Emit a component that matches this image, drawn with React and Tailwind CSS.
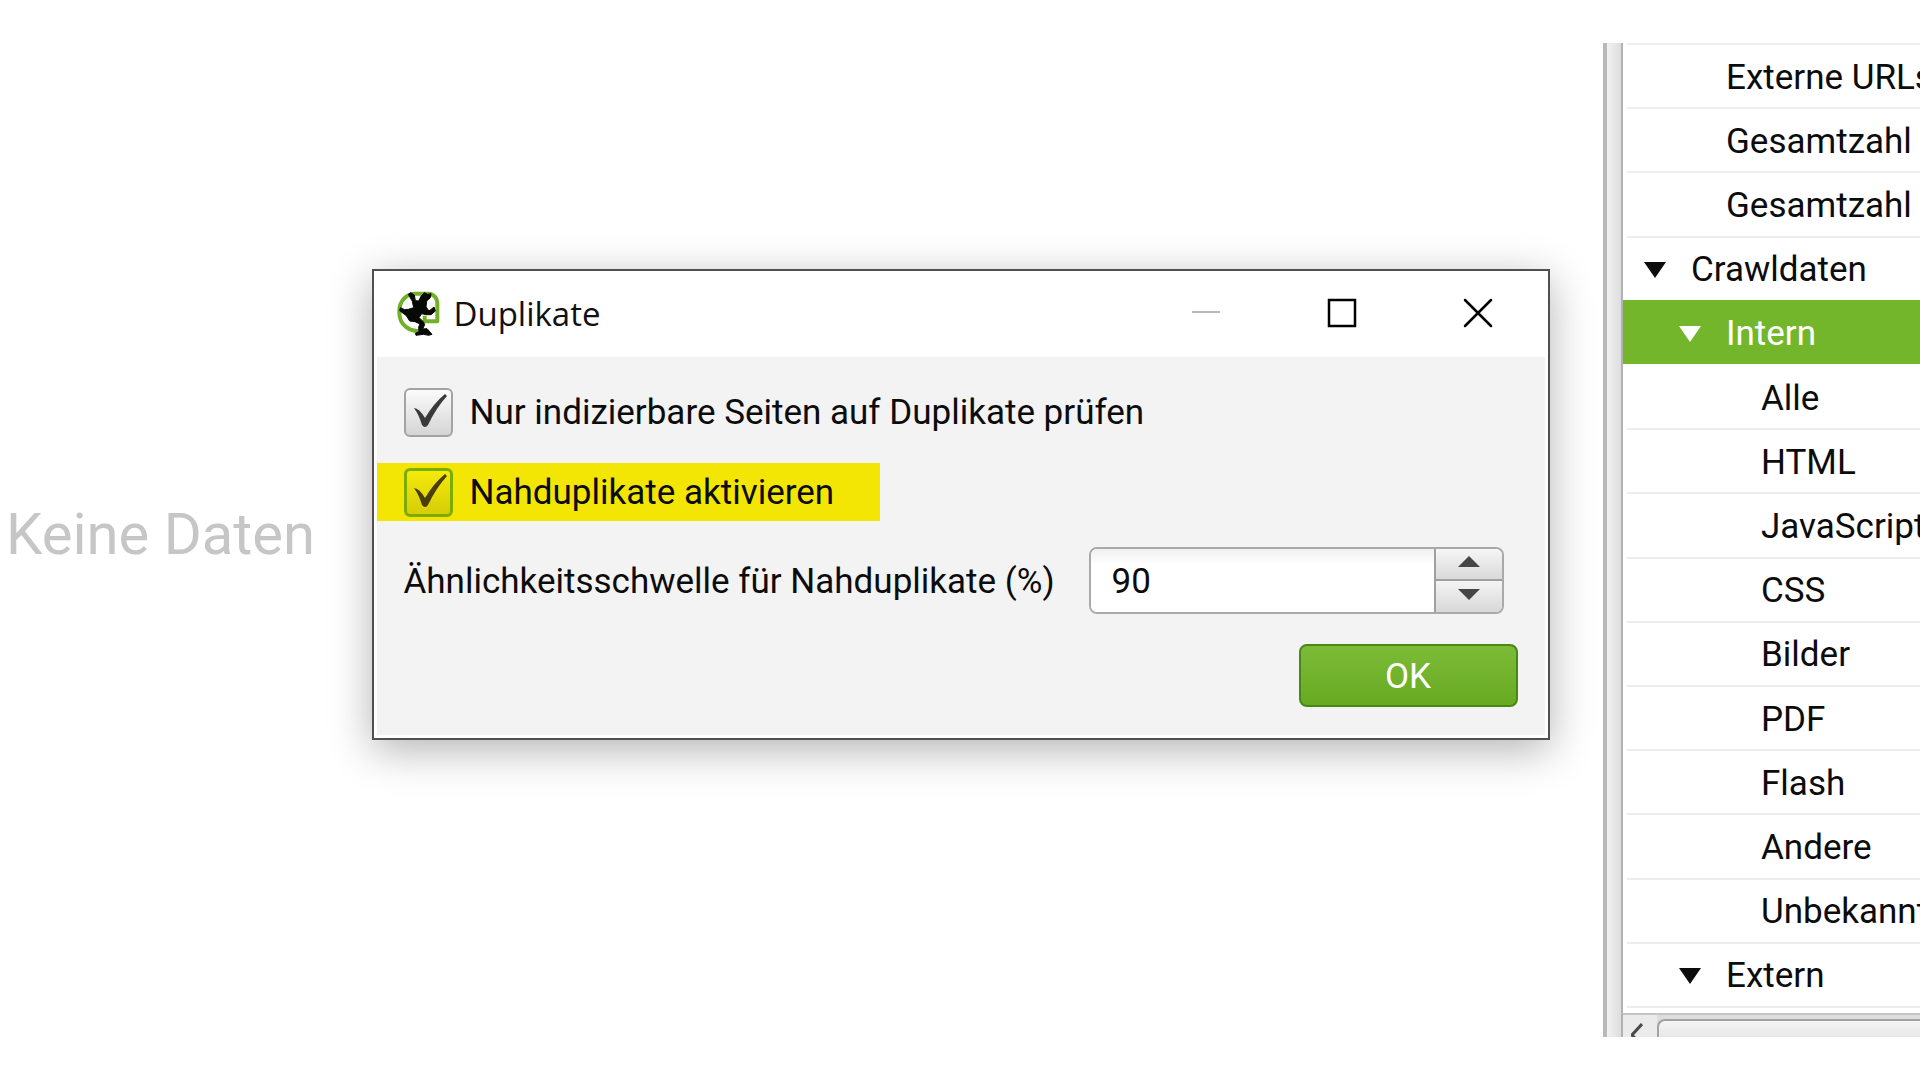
import { useState } from "react";

const rows = [
  { label: "Externe URLs", level: 1 },
  { label: "Gesamtzahl", level: 1 },
  { label: "Gesamtzahl", level: 1 },
  { label: "Crawldaten", level: 0, open: true },
  { label: "Intern", level: 1, open: true, selected: true },
  { label: "Alle", level: 2 },
  { label: "HTML", level: 2 },
  { label: "JavaScript", level: 2 },
  { label: "CSS", level: 2 },
  { label: "Bilder", level: 2 },
  { label: "PDF", level: 2 },
  { label: "Flash", level: 2 },
  { label: "Andere", level: 2 },
  { label: "Unbekannt", level: 2 },
  { label: "Extern", level: 1, open: true },
];

const indent = ["pl-4", "pl-[51px]", "pl-[86px]"];

function TreeRow({ row }) {
  const tone = row.selected
    ? "border-l-4 border-[#73b62b] bg-[#73b62b] text-white [&+li]:border-t-white"
    : "ml-1 border-[#ededed] text-[#0c0c0c]";
  return (
    <li className={`flex min-h-0 flex-1 items-center border-t-2 pt-[3px] whitespace-nowrap ${indent[row.level]} ${tone}`}>
      <span className="flex w-12 shrink-0">
        {row.open && (
          <svg className="h-4 w-6" viewBox="0 0 24 16" fill="currentColor" aria-hidden="true">
            <path d="M1 0H23L12 16Z" />
          </svg>
        )}
      </span>
      <span>{row.label}</span>
    </li>
  );
}

function Tree() {
  return (
    <aside className="flex w-[297px] shrink-0 flex-col overflow-hidden bg-white">
      <ul className="flex min-h-0 flex-1 flex-col text-[35px] leading-10">
        {rows.map((row, i) => (
          <TreeRow key={i} row={row} />
        ))}
      </ul>
      <div className="ml-1 h-[7px] shrink-0 border-t-2 border-[#ededed]" />
      <div className="flex h-6 shrink-0 overflow-hidden border-t-2 border-[#c4c4c4] bg-[#dedede]">
        <button type="button" aria-label="Nach links" className="flex w-[34px] shrink-0 bg-[#ebebeb] pt-2 pl-2">
          <svg className="h-6 w-3 shrink-0" viewBox="0 0 12 24" fill="none" stroke="#4a4a4a" strokeWidth="3" aria-hidden="true">
            <path d="M11 1L1 12L11 23" />
          </svg>
        </button>
        <div className="mt-1 h-10 flex-1 rounded-tl-lg border-t-2 border-l-2 border-[#a2a2a2] bg-linear-to-b from-[#f5f5f5] to-[#d5d5d5]" />
      </div>
    </aside>
  );
}

function Logo() {
  return (
    <svg className="h-[45px] w-[43px]" viewBox="111 89 129 135" aria-hidden="true">
      <path
        d="M182 208C150 213 118 191 118 154C116 119 140 97 165 97H205C222 98 232 110 232 128V180H194V163"
        fill="none"
        stroke="#72b02a"
        strokeWidth="12"
        strokeLinejoin="round"
      />
      <path
        d="M145 99L152 94L163 101L166 118L176 119L184 103L193 94L203 99L213 97L211 109L200 119L198 137L207 149L222 137L226 149L213 160H198L185 157L177 169L190 181L194 190L188 203L201 202L216 219L206 222L190 219L168 222L166 216L177 211L176 197L180 188L165 181L149 179L139 163L119 148L121 139L134 145L145 144L161 139L157 120Z"
        fill="#060904"
        stroke="#060904"
        strokeWidth="3"
        strokeLinejoin="round"
      />
      <path d="M130 124L143 112L151 130L139 138Z M208 122L223 119L225 134L211 139Z" fill="#f3f8ec" />
    </svg>
  );
}

function TitleBar() {
  return (
    <header className="flex h-[86px] items-center pb-0.5 pl-5">
      <Logo />
      <h1 className="ml-3.5 flex-1 pt-0.5 font-['Open_Sans',sans-serif] text-[33px] leading-10 text-[#111]">Duplikate</h1>
      <div className="flex items-center gap-[106px] pr-[52px]">
        <button type="button" disabled aria-label="Minimieren">
          <svg className="size-[30px]" viewBox="0 0 30 30" stroke="#bababa" strokeWidth="2">
            <path d="M1 14H29" />
          </svg>
        </button>
        <button type="button" aria-label="Maximieren">
          <svg className="size-[30px]" viewBox="0 0 30 30" fill="none" stroke="#000" strokeWidth="2.500">
            <path d="M2 2H28V28H2Z" />
          </svg>
        </button>
        <button type="button" aria-label="Schließen">
          <svg className="size-[30px]" viewBox="0 0 30 30" stroke="#000" strokeWidth="2.500" strokeLinecap="round">
            <path d="M2 2L28 28M28 2L2 28" />
          </svg>
        </button>
      </div>
    </header>
  );
}

function CheckOption({ id, label, highlighted }) {
  const [checked, setChecked] = useState(true);
  const box = highlighted
    ? "border-[3px] border-[#7cac00] from-[#f4ea0a] to-[#d6cd08]"
    : "border-2 border-[#a3a3a3] from-[#fbfbfb] to-[#d5d5d5]";
  return (
    <div className={`flex h-[58px] w-[503px] items-center pl-[27px] whitespace-nowrap ${highlighted ? "bg-[#f4e604]" : ""}`}>
      <span className="relative flex shrink-0">
        <input
          id={id}
          type="checkbox"
          checked={checked}
          onChange={(e) => setChecked(e.target.checked)}
          className={`size-[49px] appearance-none rounded-md bg-linear-to-b ${box}`}
        />
        {checked && (
          <svg className="pointer-events-none absolute inset-0 size-[49px]" viewBox="0 0 49 49" fill={highlighted ? "#4a3d08" : "#3a3a3a"} aria-hidden="true">
            <path d="M10 20Q15 20 21 30Q30 15 41 6L43 8Q32 20 24 37Q21 41 18 37Q15 27 10 20Z" />
          </svg>
        )}
      </span>
      <label htmlFor={id} className="pt-0.5 pl-[17px]">
        {label}
      </label>
    </div>
  );
}

function Arrow({ down }) {
  return (
    <svg className="h-[11px] w-[22px]" viewBox="0 0 22 11" fill="#454545" aria-hidden="true">
      <path d={down ? "M0 0H22L11 11Z" : "M0 11H22L11 0Z"} />
    </svg>
  );
}

function Spinner() {
  const [value, setValue] = useState(90);
  const step = (n) => setValue((v) => Math.min(100, Math.max(0, Number(v) + n)));
  return (
    <div className="flex h-[67px] w-[415px] overflow-hidden rounded-lg border-2 border-[#a9a9a9] bg-white">
      <input
        id="threshold"
        type="text"
        inputMode="numeric"
        value={value}
        onChange={(e) => setValue(e.target.value)}
        className="min-w-0 flex-1 bg-linear-to-b from-[#f0f0f0] via-white via-25% to-white pt-0.5 pl-[21px] outline-none"
      />
      <div className="grid w-[68px] grid-rows-2 border-l-2 border-[#a0a0a0]">
        <button type="button" aria-label="Erhöhen" onClick={() => step(1)} className="flex items-center justify-center border-b-2 border-[#a0a0a0] bg-linear-to-b from-[#f6f6f6] to-[#dadada] pb-1">
          <Arrow />
        </button>
        <button type="button" aria-label="Verringern" onClick={() => step(-1)} className="flex items-center justify-center bg-linear-to-b from-[#f4f4f4] to-[#d8d8d8] pb-1">
          <Arrow down />
        </button>
      </div>
    </div>
  );
}

function Dialog() {
  return (
    <section role="dialog" aria-label="Duplikate" className="w-[1178px] border-2 border-[#505050] bg-white px-[3px] pb-[3px] shadow-[0_10px_40px_rgba(0,0,0,0.3)]">
      <TitleBar />
      <form className="bg-[#f3f3f3] pt-[26px] pb-7 text-[35px] leading-10 text-[#0c0c0c]" onSubmit={(e) => e.preventDefault()}>
        <CheckOption id="indexable" label="Nur indizierbare Seiten auf Duplikate prüfen" />
        <div className="pt-[22px]">
          <CheckOption id="near" label="Nahduplikate aktivieren" highlighted />
        </div>
        <div className="flex items-center justify-between pt-[26px] pr-[41px] pl-[27px]">
          <label htmlFor="threshold" className="pt-0.5">Ähnlichkeitsschwelle für Nahduplikate (%)</label>
          <Spinner />
        </div>
        <div className="flex justify-end pt-[30px] pr-[27px]">
          <button type="submit" className="h-[63px] w-[219px] rounded-lg border-2 border-[#4b8718] bg-linear-to-b from-[#7cbb36] to-[#68aa22] pt-0.5 text-white">
            OK
          </button>
        </div>
      </form>
    </section>
  );
}

export default function App() {
  return (
    <div className="relative flex h-screen overflow-hidden bg-white pt-[43px] pb-[43px] font-['Roboto',sans-serif]">
      <main className="flex min-w-0 flex-1 items-center pb-3 pl-1.5">
        <p className="text-[58px] leading-none text-[#c6c6c6]">Keine Daten</p>
      </main>
      <div className="w-5 shrink-0 border-r-2 border-l-4 border-r-[#b2b2b2] border-l-[#b9b9b9] bg-linear-to-r from-[#f2f2f2] to-[#dddddd]" />
      <Tree />
      <div className="absolute inset-x-0 top-[269px] flex justify-center pl-px">
        <Dialog />
      </div>
    </div>
  );
}
